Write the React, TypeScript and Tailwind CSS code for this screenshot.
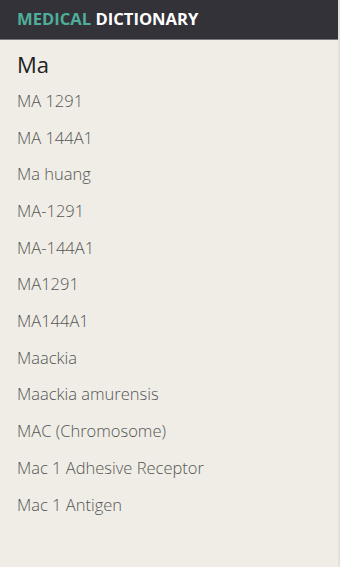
import React from "react";

const items = [
  "MA 1291",
  "MA 144A1",
  "Ma huang",
  "MA-1291",
  "MA-144A1",
  "MA1291",
  "MA144A1",
  "Maackia",
  "Maackia amurensis",
  "MAC (Chromosome)",
  "Mac 1 Adhesive Receptor",
  "Mac 1 Antigen",
];

export default function App() {
  return (
    <div className="w-[340px] h-[567px] overflow-hidden bg-[#efede6] flex flex-col border-r-2 border-[#e3e1da]" style={{ fontFamily: '"Open Sans", sans-serif' }}>
      <div className="h-[40px] shrink-0 bg-[#333238] border-b border-[#7a7a7e] flex items-center px-[17px]">
        <span className="text-[16.6px] font-bold leading-none">
          <span className="text-[#4fae9b]">MEDICAL</span>{" "}
          <span className="text-white">DICTIONARY</span>
        </span>
      </div>
      <div className="px-[17px] pt-[10px]">
        <div className="text-[22px] text-[#222] leading-[28px] font-normal">Ma</div>
        <ul className="mt-[5px] flex flex-col">
          {items.map((t) => (
            <li key={t} className="h-[36.7px] flex items-center text-[16.5px] font-light text-[#555]">
              {t}
            </li>
          ))}
        </ul>
      </div>
    </div>
  );
}
